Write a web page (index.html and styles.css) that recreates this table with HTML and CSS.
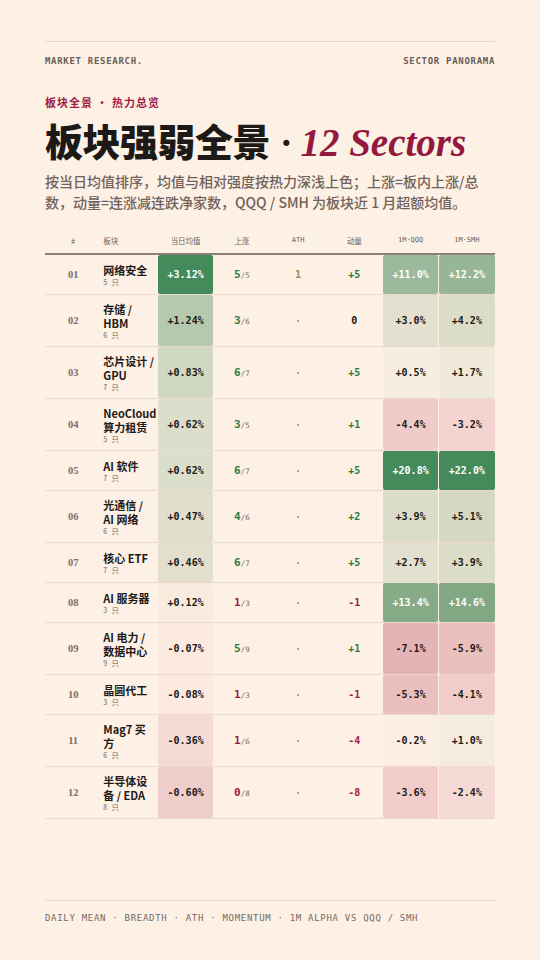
FILE: index.html
```html
<!DOCTYPE html>
<html lang="zh-CN">
<head>
<meta charset="utf-8">
<title>Sector Panorama</title>
<link rel="stylesheet" href="styles.css">
</head>
<body>
<div class="page">
  <div class="rule"></div>
  <div class="masthead">
    <span>MARKET RESEARCH.</span>
    <span>SECTOR PANORAMA</span>
  </div>
  <div class="kicker">板块全景 · 热力总览</div>
  <h1 class="title">板块强弱全景<span class="dot">·</span> <em>12 Sectors</em></h1>
  <p class="desc">按当日均值排序，均值与相对强度按热力深浅上色；上涨=板内上涨/总数，动量=连涨减连跌净家数，QQQ / SMH 为板块近 1 月超额均值。</p>

  <div class="table">
    <div class="row head">
      <div class="c ctr">#</div>
      <div class="c name-h">板块</div>
      <div class="c ctr">当日均值</div>
      <div class="c ctr">上涨</div>
      <div class="c ctr mono-h">ATH</div>
      <div class="c ctr">动量</div>
      <div class="c ctr mono-h">1M·QQQ</div>
      <div class="c ctr mono-h">1M·SMH</div>
    </div>

    <div class="row">
      <div class="c ctr num">01</div>
      <div class="c name"><b>网络安全</b><small>5 只</small></div>
      <div class="c heat light" style="background:#458a5a">+3.12%</div>
      <div class="c ctr br"><b class="up">5</b>/5</div>
      <div class="c ctr ath">1</div>
      <div class="c ctr mom up">+5</div>
      <div class="c heat light" style="background:#9bb99b">+11.0%</div>
      <div class="c heat light" style="background:#97b696">+12.2%</div>
    </div>

    <div class="row">
      <div class="c ctr num">02</div>
      <div class="c name"><b>存储 / HBM</b><small>6 只</small></div>
      <div class="c heat" style="background:#b5c9ad">+1.24%</div>
      <div class="c ctr br"><b class="up">3</b>/6</div>
      <div class="c ctr ath"><i></i></div>
      <div class="c ctr mom">0</div>
      <div class="c heat" style="background:#e3e0cf">+3.0%</div>
      <div class="c heat" style="background:#dcddc9">+4.2%</div>
    </div>

    <div class="row">
      <div class="c ctr num">03</div>
      <div class="c name"><b>芯片设计 / GPU</b><small>7 只</small></div>
      <div class="c heat" style="background:#cfd8c1">+0.83%</div>
      <div class="c ctr br"><b class="up">6</b>/7</div>
      <div class="c ctr ath"><i></i></div>
      <div class="c ctr mom up">+5</div>
      <div class="c heat" style="background:#f7ede0">+0.5%</div>
      <div class="c heat" style="background:#efe9d9">+1.7%</div>
    </div>

    <div class="row">
      <div class="c ctr num">04</div>
      <div class="c name"><b>NeoCloud 算力租赁</b><small>5 只</small></div>
      <div class="c heat" style="background:#dbdeca">+0.62%</div>
      <div class="c ctr br"><b class="up">3</b>/5</div>
      <div class="c ctr ath"><i></i></div>
      <div class="c ctr mom up">+1</div>
      <div class="c heat" style="background:#efcbc9">-4.4%</div>
      <div class="c heat" style="background:#f3d4d0">-3.2%</div>
    </div>

    <div class="row">
      <div class="c ctr num">05</div>
      <div class="c name"><b>AI 软件</b><small>7 只</small></div>
      <div class="c heat" style="background:#dbdeca">+0.62%</div>
      <div class="c ctr br"><b class="up">6</b>/7</div>
      <div class="c ctr ath"><i></i></div>
      <div class="c ctr mom up">+5</div>
      <div class="c heat light" style="background:#458a5a">+20.8%</div>
      <div class="c heat light" style="background:#458a5a">+22.0%</div>
    </div>

    <div class="row">
      <div class="c ctr num">06</div>
      <div class="c name"><b>光通信 / AI 网络</b><small>6 只</small></div>
      <div class="c heat" style="background:#e1dfcc">+0.47%</div>
      <div class="c ctr br"><b class="up">4</b>/6</div>
      <div class="c ctr ath"><i></i></div>
      <div class="c ctr mom up">+2</div>
      <div class="c heat" style="background:#dcddc8">+3.9%</div>
      <div class="c heat" style="background:#d5d9c3">+5.1%</div>
    </div>

    <div class="row">
      <div class="c ctr num">07</div>
      <div class="c name"><b>核心 ETF</b><small>7 只</small></div>
      <div class="c heat" style="background:#e2e0cd">+0.46%</div>
      <div class="c ctr br"><b class="up">6</b>/7</div>
      <div class="c ctr ath"><i></i></div>
      <div class="c ctr mom up">+5</div>
      <div class="c heat" style="background:#e2e0cf">+2.7%</div>
      <div class="c heat" style="background:#dcddc8">+3.9%</div>
    </div>

    <div class="row">
      <div class="c ctr num">08</div>
      <div class="c name"><b>AI 服务器</b><small>3 只</small></div>
      <div class="c heat" style="background:#f8ecdf">+0.12%</div>
      <div class="c ctr br"><b class="dn">1</b>/3</div>
      <div class="c ctr ath"><i></i></div>
      <div class="c ctr mom dn">-1</div>
      <div class="c heat light" style="background:#87ab87">+13.4%</div>
      <div class="c heat light" style="background:#82a883">+14.6%</div>
    </div>

    <div class="row">
      <div class="c ctr num">09</div>
      <div class="c name"><b>AI 电力 / 数据中心</b><small>9 只</small></div>
      <div class="c heat" style="background:#fce9e0">-0.07%</div>
      <div class="c ctr br"><b class="up">5</b>/9</div>
      <div class="c ctr ath"><i></i></div>
      <div class="c ctr mom up">+1</div>
      <div class="c heat" style="background:#e4b3b5">-7.1%</div>
      <div class="c heat" style="background:#eac0bf">-5.9%</div>
    </div>

    <div class="row">
      <div class="c ctr num">10</div>
      <div class="c name"><b>晶圆代工</b><small>3 只</small></div>
      <div class="c heat" style="background:#fce9e0">-0.08%</div>
      <div class="c ctr br"><b class="dn">1</b>/3</div>
      <div class="c ctr ath"><i></i></div>
      <div class="c ctr mom dn">-1</div>
      <div class="c heat" style="background:#eabfbf">-5.3%</div>
      <div class="c heat" style="background:#f1cdca">-4.1%</div>
    </div>

    <div class="row">
      <div class="c ctr num">11</div>
      <div class="c name"><b>Mag7 买方</b><small>6 只</small></div>
      <div class="c heat" style="background:#f5dbd6">-0.36%</div>
      <div class="c ctr br"><b class="dn">1</b>/6</div>
      <div class="c ctr ath"><i></i></div>
      <div class="c ctr mom dn">-4</div>
      <div class="c heat" style="background:#fdeee5">-0.2%</div>
      <div class="c heat" style="background:#f5ece0">+1.0%</div>
    </div>

    <div class="row">
      <div class="c ctr num">12</div>
      <div class="c name"><b>半导体设备 / EDA</b><small>8 只</small></div>
      <div class="c heat" style="background:#efcdcb">-0.60%</div>
      <div class="c ctr br"><b class="dn">0</b>/8</div>
      <div class="c ctr ath"><i></i></div>
      <div class="c ctr mom dn">-8</div>
      <div class="c heat" style="background:#f0cdca">-3.6%</div>
      <div class="c heat" style="background:#f5d9d4">-2.4%</div>
    </div>
  </div>

  <footer class="foot">
    <div class="rule"></div>
    <div class="foot-text">DAILY MEAN · BREADTH · ATH · MOMENTUM · 1M ALPHA VS QQQ / SMH</div>
  </footer>
</div>
</body>
</html>
```

FILE: styles.css
```css
* { box-sizing: border-box; }
html, body { margin: 0; padding: 0; }
body {
  background: #fdf0e5;
  color: #1d1a17;
  font-family: "Noto Sans CJK SC", "Noto Sans", sans-serif;
}
.page {
  width: 540px;
  min-height: 960px;
  padding: 41px 45px 36px;
  display: flex;
  flex-direction: column;
}
.rule {
  height: 1px;
  background: #e6d8cc;
}
.masthead {
  margin-top: 13px;
  display: flex;
  justify-content: space-between;
  font-family: "DejaVu Sans Mono", monospace;
  font-weight: bold;
  font-size: 9px;
  line-height: 12px;
  letter-spacing: 0.7px;
  color: #6a5e56;
}
.kicker {
  margin-top: 28px;
  font-size: 11px;
  line-height: 14px;
  font-weight: 700;
  letter-spacing: 1px;
  color: #a01c45;
}
.title {
  margin: 9px 0 0;
  font-size: 38px;
  line-height: 44px;
  font-weight: 900;
  letter-spacing: -0.5px;
  color: #1c1916;
  white-space: nowrap;
}
.title .dot {
  font-family: "Liberation Serif", serif;
  font-weight: bold;
  margin-left: 10px;
}
.title em {
  font-family: "Liberation Serif", serif;
  font-style: italic;
  font-weight: bold;
  font-size: 39px;
  letter-spacing: 0;
  color: #931a3e;
}
.desc {
  margin: 6px 0 0;
  font-size: 14px;
  line-height: 21px;
  font-weight: 500;
  color: #72625a;
}
.table { margin-top: 14px; }
.row {
  display: grid;
  grid-template-columns: repeat(8, 1fr);
  border-bottom: 1px solid #ead9cc;
  min-height: 40px;
}
.row.head {
  height: 28px;
  min-height: 0;
  border-bottom: 2px solid #8c8078;
  font-size: 7.5px;
  color: #6e625a;
  align-items: center;
}
.head .mono-h { font-family: "DejaVu Sans Mono", monospace; font-size: 7px; }
.head .name-h { padding-left: 2px; }
.c {
  display: flex;
  align-items: center;
  min-width: 0;
}
.ctr { justify-content: center; }
.num {
  font-family: "Liberation Serif", serif;
  font-weight: bold;
  font-size: 10.5px;
  color: #7d6f66;
}
.name {
  flex-direction: column;
  align-items: flex-start;
  justify-content: center;
  padding: 6.5px 0 6.5px 2px;
}
.name b {
  display: block;
  width: 52px;
  font-size: 11px;
  line-height: 14px;
  font-weight: 700;
  color: #1d1a17;
  white-space: normal;
}
.name small {
  display: block;
  font-size: 7px;
  line-height: 10px;
  color: #6e625a;
  letter-spacing: 0.5px;
  word-spacing: 2px;
}
.heat {
  justify-content: center;
  margin: 0 0.5px;
  border-radius: 2px;
  font-family: "DejaVu Sans Mono", monospace;
  font-weight: bold;
  font-size: 10px;
  color: #1d1a17;
}
.heat.light { color: #ffffff; }
.br {
  font-family: "DejaVu Sans Mono", monospace;
  font-size: 7.5px;
  color: #7d6f66;
  align-items: baseline;
  align-content: center;
  flex-wrap: wrap;
}
.br b { font-size: 11px; }
.up { color: #2e7a46; }
.dn { color: #9e1b45; }
.ath {
  font-family: "DejaVu Sans Mono", monospace;
  font-size: 11px;
  font-weight: bold;
  color: #b08a4e;
}
.ath i {
  display: block;
  width: 2px;
  height: 2px;
  background: #cf9d62;
}
.mom {
  font-family: "DejaVu Sans Mono", monospace;
  font-weight: bold;
  font-size: 10px;
}
.mom.up { color: #2e7a46; }
.mom.dn { color: #9e1b45; }
.foot { margin-top: auto; }
.foot-text {
  margin-top: 11px;
  font-family: "DejaVu Sans Mono", monospace;
  font-size: 9px;
  line-height: 12px;
  letter-spacing: 0.7px;
  color: #76695f;
}
```
